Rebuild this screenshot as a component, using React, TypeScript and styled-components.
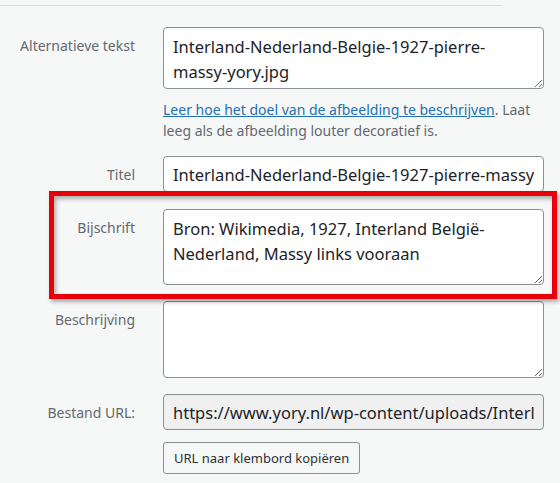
import styled, { createGlobalStyle } from "styled-components";

const GlobalStyle = createGlobalStyle`
  html, body {
    margin: 0;
    padding: 0;
    background: #f6f7f7;
  }
  body {
    font-family: "Noto Sans", "Open Sans", sans-serif;
    color: #2c3338;
  }
`;

const Page = styled.div`
  position: relative;
  width: 560px;
  height: 483px;
  overflow: hidden;
  padding-top: 5px;
  box-sizing: border-box;
`;

const Divider = styled.hr`
  width: 502px;
  height: 0;
  margin: 0;
  border: 0;
  border-top: 1px solid #dcdcde;
`;

const Settings = styled.div`
  display: flex;
  flex-direction: column;
  padding-top: 21px;
`;

const Row = styled.div<{ gap?: number }>`
  display: grid;
  grid-template-columns: 135px 381px;
  column-gap: 28px;
  margin-bottom: ${({ gap }) => (gap !== undefined ? gap : 16)}px;
`;

const Label = styled.label`
  padding-top: 8px;
  text-align: right;
  font-size: 14px;
  line-height: 21px;
  color: #646970;
  white-space: nowrap;
`;

const Field = styled.div`
  display: flex;
  flex-direction: column;
`;

const TextArea = styled.textarea<{ h: number }>`
  box-sizing: border-box;
  width: 100%;
  height: ${({ h }) => h}px;
  margin: 0;
  padding: 6px 9px;
  border: 1px solid #8c8f94;
  border-radius: 4px;
  background: #fff;
  color: #1d2327;
  font-family: inherit;
  font-size: 16.5px;
  line-height: 25px;
  white-space: pre;
  overflow: hidden;
  outline: none;
  resize: vertical;
`;

const TextInput = styled.input<{ readOnlyLook?: boolean }>`
  box-sizing: border-box;
  width: 100%;
  height: 36px;
  margin: 0;
  padding: 0 9px;
  border: 1px solid #8c8f94;
  border-radius: 4px;
  background: ${({ readOnlyLook }) => (readOnlyLook ? "#f0f0f1" : "#fff")};
  color: #1d2327;
  font-family: inherit;
  font-size: 16.5px;
  outline: none;
`;

const Help = styled.p`
  margin: 10px 0 0;
  font-size: 14px;
  line-height: 21px;
  color: #646970;
  white-space: nowrap;

  a {
    color: #2271b1;
    text-decoration: underline;
  }
`;

const CopyButton = styled.button`
  align-self: flex-start;
  height: 32px;
  margin-top: 12px;
  padding: 0 10px;
  border: 1px solid #8c8f94;
  border-radius: 3px;
  background: #f6f7f7;
  color: #2c3338;
  font-family: inherit;
  font-size: 13px;
  line-height: 30px;
  cursor: pointer;
`;

// red highlight frame drawn over the caption row
const Highlight = styled.div`
  position: absolute;
  left: 49px;
  top: 191px;
  width: 508px;
  height: 108px;
  box-sizing: border-box;
  border: 5px solid #e8000b;
  box-shadow: 2px 3px 4px rgba(0, 0, 0, 0.3), inset 2px 3px 4px rgba(0, 0, 0, 0.3);
  pointer-events: none;
`;

const fileUrl =
  "https://www.yory.nl/wp-content/uploads/Interland-Nederland-Belgie-1927-pierre-massy-yory.jpg";

function App() {
  return (
    <Page>
      <GlobalStyle />
      <Divider />
      <Settings>
        <Row gap={15}>
          <Label>Alternatieve tekst</Label>
          <Field>
            <TextArea h={62} readOnly value={"Interland-Nederland-Belgie-1927-pierre-\nmassy-yory.jpg"} />
            <Help>
              <a href="#">Leer hoe het doel van de afbeelding te beschrijven</a>. Laat
              <br />
              leeg als de afbeelding louter decoratief is.
            </Help>
          </Field>
        </Row>
        <Row gap={17}>
          <Label>Titel</Label>
          <TextInput readOnly value="Interland-Nederland-Belgie-1927-pierre-massy-yory" />
        </Row>
        <Row>
          <Label>Bijschrift</Label>
          <TextArea h={76} readOnly value={"Bron: Wikimedia, 1927, Interland België-\nNederland, Massy links vooraan"} />
        </Row>
        <Row>
          <Label>Beschrijving</Label>
          <TextArea h={77} readOnly value="" />
        </Row>
        <Row gap={0}>
          <Label>Bestand URL:</Label>
          <Field>
            <TextInput readOnlyLook readOnly value={fileUrl} />
            <CopyButton type="button">URL naar klembord kopiëren</CopyButton>
          </Field>
        </Row>
      </Settings>
      <Highlight />
    </Page>
  );
}

export default App;
